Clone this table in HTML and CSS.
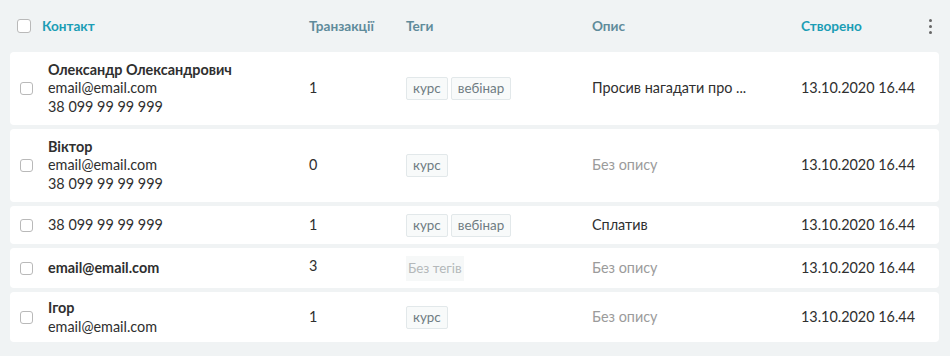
FILE: index.html
```html
<!DOCTYPE html>
<html lang="uk">
<head>
<meta charset="utf-8">
<link rel="stylesheet" href="styles.css">
</head>
<body>
<div class="table">
  <div class="head">
    <span class="cb cb-head"></span>
    <div class="h h-accent">Контакт</div>
    <div class="h">Транзакції</div>
    <div class="h">Теги</div>
    <div class="h">Опис</div>
    <div class="h h-accent">Створено</div>
    <div class="kebab"><i></i><i></i><i></i></div>
  </div>

  <div class="row r3">
    <div class="c-cb"><span class="cb"></span></div>
    <div class="contact"><div class="name">Олександр Олександрович</div><div>email@email.com</div><div>38 099 99 99 999</div></div>
    <div>1</div>
    <div class="tags"><span class="tag">курс</span><span class="tag">вебінар</span></div>
    <div>Просив нагадати про ...</div>
    <div>13.10.2020 16.44</div>
  </div>

  <div class="row r3">
    <div class="c-cb"><span class="cb"></span></div>
    <div class="contact"><div class="name">Віктор</div><div>email@email.com</div><div>38 099 99 99 999</div></div>
    <div>0</div>
    <div class="tags"><span class="tag">курс</span></div>
    <div class="muted">Без опису</div>
    <div>13.10.2020 16.44</div>
  </div>

  <div class="row r1">
    <div class="c-cb"><span class="cb"></span></div>
    <div class="contact"><div>38 099 99 99 999</div></div>
    <div>1</div>
    <div class="tags"><span class="tag">курс</span><span class="tag">вебінар</span></div>
    <div>Сплатив</div>
    <div>13.10.2020 16.44</div>
  </div>

  <div class="row r1b">
    <div class="c-cb"><span class="cb"></span></div>
    <div class="contact"><div class="name">email@email.com</div></div>
    <div class="up">3</div>
    <div class="tags"><span class="notag">Без тегів</span></div>
    <div class="muted">Без опису</div>
    <div>13.10.2020 16.44</div>
  </div>

  <div class="row r2">
    <div class="c-cb"><span class="cb"></span></div>
    <div class="contact"><div class="name">Ігор</div><div>email@email.com</div></div>
    <div>1</div>
    <div class="tags"><span class="tag">курс</span></div>
    <div class="muted">Без опису</div>
    <div>13.10.2020 16.44</div>
  </div>
</div>
</body>
</html>
```

FILE: styles.css
```css
* { box-sizing: border-box; }
html, body { margin: 0; padding: 0; }
body {
  background: #f0f3f4;
  font-family: "Lato", "Noto Sans", sans-serif;
  font-size: 14.4px;
  color: #2f2f2f;
  width: 950px;
  height: 356px;
  overflow: hidden;
}
.table {
  padding: 0 11px 0 10px;
  display: flex;
  flex-direction: column;
  gap: 4px;
}
.head {
  display: grid;
  grid-template-columns: 25px 267px 97px 186px 209px 1fr 20px;
  align-items: center;
  height: 48px;
  padding-top: 4px;
  margin-left: -10px;
  padding-left: 17px;
}
.h {
  font-size: 13.6px;
  font-weight: 700;
  color: #5f8b9b;
}
.h-accent { color: #1b9db5; }
.kebab {
  display: flex;
  flex-direction: column;
  align-items: center;
  gap: 3px;
  width: 20px;
  margin-left: 1px;
}
.kebab i {
  display: block;
  width: 3px;
  height: 3px;
  border-radius: 50%;
  background: #666;
}
.cb {
  display: block;
  width: 13px;
  height: 13px;
  border: 1px solid #b9b9b9;
  border-radius: 3px;
  background: #fff;
}
.cb-head { width: 14px; height: 14px; }
.row {
  display: grid;
  grid-template-columns: 38px 261px 97px 186px 209px 1fr;
  align-items: center;
  background: #fff;
  border-radius: 4px;
  line-height: 18.5px;
}
.c-cb { padding-left: 10px; }
.r3 { min-height: 73px; }
.r1 { min-height: 38px; }
.r1b { min-height: 40px; }
.r2 { min-height: 50px; }
.r2 .contact { padding-top: 1px; }
.name { font-weight: 700; }
.muted { color: #9b9b9b; }
.up { margin-top: -4px; }
.tags { display: flex; gap: 3px; }
.tag {
  font-size: 13.4px;
  color: #6f7c82;
  border: 1px solid #e2e8ea;
  background: #f8fafa;
  border-radius: 2px;
  padding: 2px 6px;
  line-height: 17px;
}
.notag {
  font-size: 13.4px;
  color: #b4b8ba;
  background: #f6f8f8;
  padding: 3px 2px;
  line-height: 19px;
}
```
